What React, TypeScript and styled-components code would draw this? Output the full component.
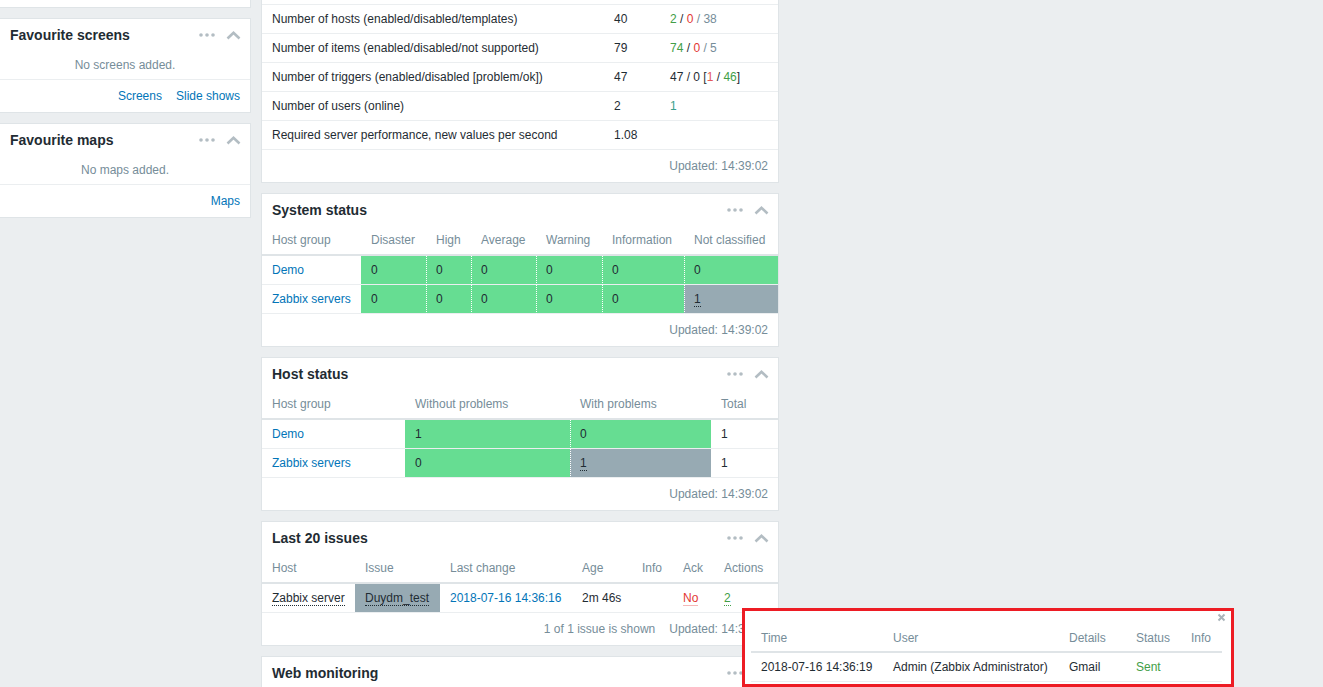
import styled, { createGlobalStyle } from "styled-components";

const GlobalStyle = createGlobalStyle`
  html, body {
    margin: 0;
    padding: 0;
  }
  body {
    background: #ebeef0;
    font-family: "Liberation Sans", Arial, sans-serif;
    font-size: 12px;
    color: #1f2c33;
  }
`;

const Page = styled.div`
  position: relative;
  box-sizing: border-box;
  height: 687px;
  overflow: hidden;
  display: grid;
  grid-template-columns: 251px 518px;
  column-gap: 10px;
  align-items: start;
`;

const Column = styled.div`
  display: flex;
  flex-direction: column;
  gap: 10px;
`;

const Widget = styled.section<{ $clipped?: boolean; $height?: number; $flush?: boolean }>`
  box-sizing: border-box;
  background: #fff;
  border: 1px solid #dfe4e7;
  ${(p) => p.$clipped && "border-top: none; padding-top: 4px;"}
  ${(p) => p.$flush && "border-left: none;"}
  ${(p) => p.$height !== undefined && `height: ${p.$height}px;`}
`;

const WidgetHeader = styled.header`
  display: flex;
  align-items: center;
  justify-content: space-between;
  height: 32px;
  padding: 0 9px 0 10px;
`;

const Title = styled.h4`
  margin: 0;
  font-size: 14px;
  font-weight: bold;
  color: #1f2c33;
`;

const Tools = styled.div`
  display: flex;
  align-items: center;
  gap: 11px;
`;

const EmptyMessage = styled.div`
  height: 28px;
  display: flex;
  align-items: center;
  justify-content: center;
  color: #768d99;
  border-bottom: 1px solid #ebeef0;
`;

const WidgetFooter = styled.footer`
  display: flex;
  justify-content: flex-end;
  align-items: center;
  gap: 14px;
  height: 32px;
  padding: 0 10px;
  color: #768d99;
`;

const Link = styled.a`
  color: #0275b8;
  text-decoration: none;
  cursor: pointer;
`;

const Table = styled.table`
  width: 100%;
  border-collapse: separate;
  border-spacing: 0;
  font-size: 12px;
`;

const Col = styled.col<{ $w: number }>`
  width: ${(p) => p.$w}px;
`;

const Th = styled.th`
  box-sizing: border-box;
  height: 30px;
  padding: 0 10px;
  text-align: left;
  font-weight: normal;
  color: #768d99;
  white-space: nowrap;
  border-bottom: 2px solid #dfe4e7;
`;

type CellTone = "ok" | "problem" | undefined;

const Td = styled.td<{ $tone?: CellTone; $sep?: boolean }>`
  box-sizing: border-box;
  height: 29px;
  padding: 0 10px;
  white-space: nowrap;
  border-bottom: 1px solid #ebeef0;
  background: ${(p) =>
    p.$tone === "ok" ? "#66dd92" : p.$tone === "problem" ? "#97aab3" : "transparent"};
  ${(p) => p.$sep && "border-left: 1px dotted #ffffff; padding-left: 9px;"}
`;

const TopRowTable = styled(Table)`
  border-top: 1px solid #ebeef0;
`;

const Tone = styled.span<{ $c: "green" | "red" | "grey" | "teal" | "orange" }>`
  color: ${(p) =>
    ({ green: "#429e47", red: "#e33734", grey: "#768d99", teal: "#3b9f8c", orange: "#e45959" })[
      p.$c
    ]};
`;

const ActionLink = styled.span<{ $c?: string; $solid?: boolean }>`
  color: ${(p) => p.$c ?? "#1f2c33"};
  border-bottom: 1px ${(p) => (p.$solid ? "solid" : "dotted")}
    ${(p) => (p.$solid ? "rgba(227, 55, 52, 0.35)" : p.$c ?? "#1f2c33")};
  cursor: pointer;
`;

const Popup = styled.div`
  position: absolute;
  left: 742px;
  top: 608px;
  box-sizing: border-box;
  width: 492px;
  height: 79px;
  background: #fff;
  border: 3px solid #ed1c24;
  padding: 0 9px 0 6px;
`;

const CloseRow = styled.div`
  display: flex;
  justify-content: flex-end;
  align-items: center;
  height: 13px;
  margin-right: -4px;
`;

const PopupTh = styled(Th)`
  height: 29px;
`;

function Dots() {
  return (
    <svg width="16" height="4" viewBox="0 0 16 4">
      <circle cx="2" cy="2" r="1.8" fill="#b3bdc3" />
      <circle cx="8" cy="2" r="1.8" fill="#b3bdc3" />
      <circle cx="14" cy="2" r="1.8" fill="#b3bdc3" />
    </svg>
  );
}

function Chevron() {
  return (
    <svg width="15" height="9" viewBox="0 0 15 9">
      <polyline points="1.5,7.5 7.5,1.8 13.5,7.5" fill="none" stroke="#b3bdc3" strokeWidth="2.6" />
    </svg>
  );
}

function CloseIcon() {
  return (
    <svg width="9" height="9" viewBox="0 0 9 9">
      <path d="M1.5 1.5 L7.5 7.5 M7.5 1.5 L1.5 7.5" stroke="#aab4ba" strokeWidth="2" />
    </svg>
  );
}

function Head({ title }: { title: string }) {
  return (
    <WidgetHeader>
      <Title>{title}</Title>
      <Tools>
        <Dots />
        <Chevron />
      </Tools>
    </WidgetHeader>
  );
}

function Updated({ extra }: { extra?: string }) {
  return (
    <WidgetFooter>
      {extra && <span>{extra}</span>}
      <span>Updated: 14:39:02</span>
    </WidgetFooter>
  );
}

function Cols({ widths }: { widths: number[] }) {
  return (
    <colgroup>
      {widths.map((w, i) => (
        <Col key={i} $w={w} />
      ))}
      <col />
    </colgroup>
  );
}

const severities = ["Disaster", "High", "Average", "Warning", "Information", "Not classified"];

export default function App() {
  return (
    <Page>
      <GlobalStyle />
      <Column>
        <Widget $clipped $flush $height={8} />
        <Widget $flush>
          <Head title="Favourite screens" />
          <EmptyMessage>No screens added.</EmptyMessage>
          <WidgetFooter>
            <Link>Screens</Link>
            <Link>Slide shows</Link>
          </WidgetFooter>
        </Widget>
        <Widget $flush>
          <Head title="Favourite maps" />
          <EmptyMessage>No maps added.</EmptyMessage>
          <WidgetFooter>
            <Link>Maps</Link>
          </WidgetFooter>
        </Widget>
      </Column>

      <Column>
        <Widget $clipped>
          <TopRowTable>
            <Cols widths={[342, 56]} />
            <tbody>
              <tr>
                <Td>Number of hosts (enabled/disabled/templates)</Td>
                <Td>40</Td>
                <Td>
                  <Tone $c="green">2</Tone> / <Tone $c="red">0</Tone>{" "}
                  <Tone $c="grey">/ 38</Tone>
                </Td>
              </tr>
              <tr>
                <Td>Number of items (enabled/disabled/not supported)</Td>
                <Td>79</Td>
                <Td>
                  <Tone $c="green">74</Tone> / <Tone $c="red">0</Tone>{" "}
                  <Tone $c="grey">/ 5</Tone>
                </Td>
              </tr>
              <tr>
                <Td>Number of triggers (enabled/disabled [problem/ok])</Td>
                <Td>47</Td>
                <Td>
                  47 / 0 [<Tone $c="orange">1</Tone> / <Tone $c="green">46</Tone>]
                </Td>
              </tr>
              <tr>
                <Td>Number of users (online)</Td>
                <Td>2</Td>
                <Td>
                  <Tone $c="teal">1</Tone>
                </Td>
              </tr>
              <tr>
                <Td>Required server performance, new values per second</Td>
                <Td>1.08</Td>
                <Td />
              </tr>
            </tbody>
          </TopRowTable>
          <Updated />
        </Widget>

        <Widget>
          <Head title="System status" />
          <Table>
            <Cols widths={[99, 65, 45, 65, 66, 82]} />
            <thead>
              <tr>
                <Th>Host group</Th>
                {severities.map((s) => (
                  <Th key={s}>{s}</Th>
                ))}
              </tr>
            </thead>
            <tbody>
              <tr>
                <Td>
                  <Link>Demo</Link>
                </Td>
                {severities.map((s, i) => (
                  <Td key={s} $tone="ok" $sep={i > 0}>
                    0
                  </Td>
                ))}
              </tr>
              <tr>
                <Td>
                  <Link>Zabbix servers</Link>
                </Td>
                {severities.map((s, i) =>
                  i === 5 ? (
                    <Td key={s} $tone="problem" $sep>
                      <ActionLink>1</ActionLink>
                    </Td>
                  ) : (
                    <Td key={s} $tone="ok" $sep={i > 0}>
                      0
                    </Td>
                  )
                )}
              </tr>
            </tbody>
          </Table>
          <Updated />
        </Widget>

        <Widget>
          <Head title="Host status" />
          <Table>
            <Cols widths={[143, 165, 141]} />
            <thead>
              <tr>
                <Th>Host group</Th>
                <Th>Without problems</Th>
                <Th>With problems</Th>
                <Th>Total</Th>
              </tr>
            </thead>
            <tbody>
              <tr>
                <Td>
                  <Link>Demo</Link>
                </Td>
                <Td $tone="ok">1</Td>
                <Td $tone="ok" $sep>
                  0
                </Td>
                <Td>1</Td>
              </tr>
              <tr>
                <Td>
                  <Link>Zabbix servers</Link>
                </Td>
                <Td $tone="ok">0</Td>
                <Td $tone="problem" $sep>
                  <ActionLink>1</ActionLink>
                </Td>
                <Td>1</Td>
              </tr>
            </tbody>
          </Table>
          <Updated />
        </Widget>

        <Widget>
          <Head title="Last 20 issues" />
          <Table>
            <Cols widths={[93, 85, 132, 60, 41, 41]} />
            <thead>
              <tr>
                <Th>Host</Th>
                <Th>Issue</Th>
                <Th>Last change</Th>
                <Th>Age</Th>
                <Th>Info</Th>
                <Th>Ack</Th>
                <Th>Actions</Th>
              </tr>
            </thead>
            <tbody>
              <tr>
                <Td>
                  <ActionLink>Zabbix server</ActionLink>
                </Td>
                <Td $tone="problem">
                  <ActionLink>Duydm_test</ActionLink>
                </Td>
                <Td>
                  <Link>2018-07-16 14:36:16</Link>
                </Td>
                <Td>2m 46s</Td>
                <Td />
                <Td>
                  <ActionLink $c="#e33734" $solid>
                    No
                  </ActionLink>
                </Td>
                <Td>
                  <ActionLink $c="#429e47">2</ActionLink>
                </Td>
              </tr>
            </tbody>
          </Table>
          <Updated extra="1 of 1 issue is shown" />
        </Widget>

        <Widget $height={120}>
          <Head title="Web monitoring" />
        </Widget>
      </Column>

      <Popup>
        <CloseRow>
          <CloseIcon />
        </CloseRow>
        <Table>
          <Cols widths={[132, 176, 67, 55]} />
          <thead>
            <tr>
              <PopupTh>Time</PopupTh>
              <PopupTh>User</PopupTh>
              <PopupTh>Details</PopupTh>
              <PopupTh>Status</PopupTh>
              <PopupTh>Info</PopupTh>
            </tr>
          </thead>
          <tbody>
            <tr>
              <Td>2018-07-16 14:36:19</Td>
              <Td>Admin (Zabbix Administrator)</Td>
              <Td>Gmail</Td>
              <Td>
                <Tone $c="green">Sent</Tone>
              </Td>
              <Td />
            </tr>
          </tbody>
        </Table>
      </Popup>
    </Page>
  );
}
